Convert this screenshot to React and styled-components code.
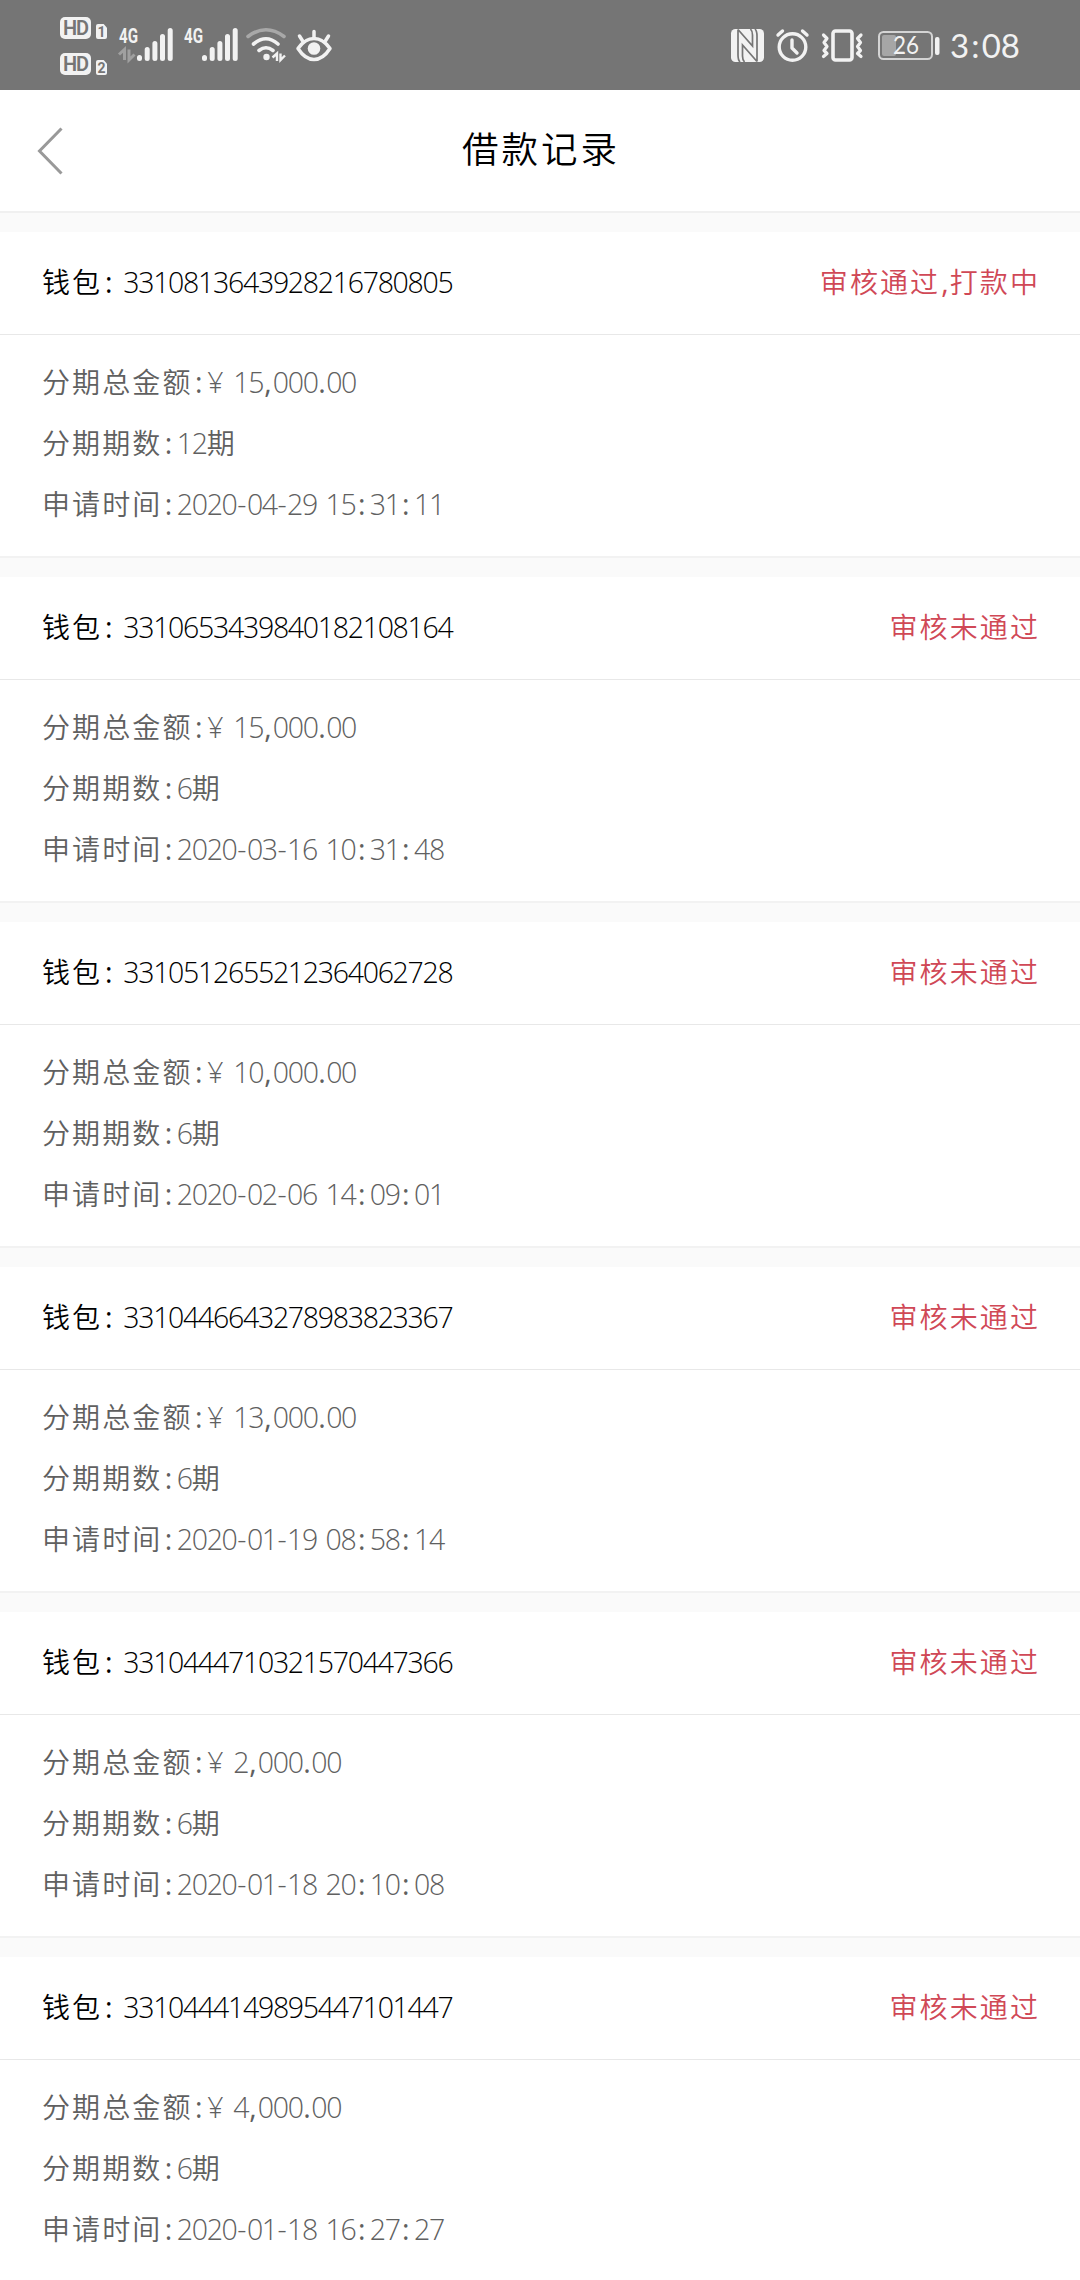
import React from "react";
import styled, { createGlobalStyle } from "styled-components";

const GlobalStyle = createGlobalStyle`
  * { box-sizing: border-box; }
  body {
    margin: 0;
    background: #fff;
    font-family: "Open Sans", "Noto Sans CJK SC", sans-serif;
    font-weight: 300;
  }
`;

const ink = "#f2f2f2";

const Page = styled.div`
  display: flex;
  flex-direction: column;
  width: 1080px;
  height: 2280px;
  overflow: hidden;
  background: #fafafa;
`;

const StatusBar = styled.div`
  flex: none;
  display: flex;
  justify-content: space-between;
  height: 90px;
  padding: 0 60px;
  background: #757575;
  color: ${ink};
`;

const StatusGroup = styled.div`
  display: flex;
  align-items: flex-start;
`;

const StatusIcon = styled.svg`
  flex: none;
  display: block;
  margin: ${(p) => p.$top}px ${(p) => p.$after || 0}px 0 0;
  overflow: visible;
`;

const HdStack = styled.div`
  display: flex;
  flex-direction: column;
  gap: 14px;
  margin: 17px 12px 0 0;
`;

const HdRow = styled.div`
  display: flex;
  align-items: flex-start;
  gap: 5px;
`;

const HdBadge = styled.span`
  width: 31px;
  height: 22px;
  border-radius: 5px;
  background: ${ink};
  color: #757575;
  font: 600 20px/22px Roboto, sans-serif;
  letter-spacing: -1px;
  text-align: center;
`;

const SimBadge = styled.span`
  width: 11px;
  height: 15px;
  margin-top: 7px;
  border-radius: 2px;
  clip-path: polygon(0 0, 70% 0, 100% 25%, 100% 100%, 0 100%);
  background: ${ink};
  color: #757575;
  font: 700 14px/16px Roboto, sans-serif;
  text-align: center;
`;

const Clock = styled.span`
  display: flex;
  margin-top: 27px;
  width: 70px;
  font: 400 33px/36px Lato, sans-serif;
  white-space: nowrap;
`;

const ClockColon = styled.span`
  width: 14px;
  text-align: center;
`;

const Header = styled.header`
  flex: none;
  display: grid;
  grid-template-columns: 120px 1fr 120px;
  align-items: center;
  height: 123px;
  background: #fff;
  border-bottom: 2px solid #f0f0f0;
`;

const BackButton = styled.button`
  display: flex;
  padding: 0 0 0 36px;
  border: 0;
  background: none;
`;

const Title = styled.h1`
  margin: 0;
  padding: 0 0 3px 2px;
  font-size: 36.5px;
  font-weight: 350;
  letter-spacing: 3px;
  line-height: 54px;
  text-align: center;
  color: #000;
`;

const Records = styled.main`
  flex: none;
  display: flex;
  flex-direction: column;
  gap: 19px;
  padding-top: 19px;
`;

const Card = styled.section`
  background: #fff;
  border-bottom: 2px solid #f2f2f2;
`;

const CardHead = styled.div`
  display: flex;
  justify-content: space-between;
  height: 103px;
  padding: 0 40px 0 42px;
  border-bottom: 1px solid #e8e8e8;
  line-height: 100px;
  color: #000;
`;

const CardBody = styled.div`
  height: 221px;
  padding: 17px 42px 0;
  color: #606060;
`;

const Line = styled.div`
  height: 61px;
  line-height: 61px;
`;

const Status = styled.span`
  color: #d04856;
`;

const Han = styled.span`
  font-size: 28px;
  font-weight: 350;
  letter-spacing: 2.1px;
`;

const Digits = styled.span`
  font-size: 28.5px;
  font-weight: 350;
  letter-spacing: -1.3px;
`;

const Mark = styled.span`
  display: inline-block;
  width: ${(p) => p.$box[0]}px;
  padding-right: ${(p) => p.$box[1]}px;
  font-size: 28.5px;
  font-weight: ${(p) => p.$box[2] || 400};
  text-align: center;
  white-space: nowrap;
`;

// Width, trailing space and weight of each punctuation mark.
const MARKS = {
  ":": [14.3, 2, 500],
  "：": [21, 8, 500],
  ",": [9.5, 0],
  ".": [8.5, 0],
  "-": [10.3, 0, 350],
  "¥": [18, 1, 350],
  " ": [8.5, 0],
};

// Splits a string into Han, digit and punctuation runs, each with its own tracking.
function Text({ children }) {
  const runs = children.match(/[0-9]+|[:：,.\-¥ ]|[^0-9:：,.\-¥ ]+/g) || [];
  return runs.map((run, i) => {
    if (/^[0-9]/.test(run)) return <Digits key={i}>{run}</Digits>;
    if (run in MARKS) return <Mark key={i} $box={MARKS[run]}>{run === "：" ? ":" : run === " " ? "\u00a0" : run}</Mark>;
    return <Han key={i}>{run}</Han>;
  });
}

const records = [
  { wallet: "3310813643928216780805", status: "审核通过,打款中", amount: "15,000.00", terms: 12, time: "2020-04-29 15:31:11" },
  { wallet: "3310653439840182108164", status: "审核未通过", amount: "15,000.00", terms: 6, time: "2020-03-16 10:31:48" },
  { wallet: "3310512655212364062728", status: "审核未通过", amount: "10,000.00", terms: 6, time: "2020-02-06 14:09:01" },
  { wallet: "3310446643278983823367", status: "审核未通过", amount: "13,000.00", terms: 6, time: "2020-01-19 08:58:14" },
  { wallet: "3310444710321570447366", status: "审核未通过", amount: "2,000.00", terms: 6, time: "2020-01-18 20:10:08" },
  { wallet: "3310444149895447101447", status: "审核未通过", amount: "4,000.00", terms: 6, time: "2020-01-18 16:27:27" },
];

function Signal({ active, after }) {
  return (
    <StatusIcon $top={27} $after={after} width="54" height="35" viewBox="0 0 54 35">
      <text x="0" y="15.5" fill={ink} fontFamily="Roboto" fontWeight="700" fontSize="20" textLength="19" lengthAdjust="spacingAndGlyphs">4G</text>
      {active && <path d="M0 27.500L5.500 22.500V33M10 22.500V33L15.500 27.500" fill="none" stroke="#a0a0a0" strokeWidth="3" />}
      <g stroke={ink} strokeWidth="5" strokeLinecap="round">
        <path d="M20.5 30.5v1M28.2 22.5v9M35.9 16.5v15M43.5 9.500v22M51.200 3.500v28" />
      </g>
    </StatusIcon>
  );
}

function Wifi() {
  return (
    <StatusIcon $top={28} $after={9} width="41" height="34" viewBox="0 0 41 34" fill="none" stroke={ink} strokeWidth="3.6" strokeLinecap="round">
      <path d="M2 8.500Q20 -5 38 8.500" stroke="#a8a8a8" />
      <path d="M7.500 16Q20 5.500 32 16M13 22.500Q20 17 27 22.500" />
      <circle cx="20.500" cy="29" r="3.200" fill={ink} stroke="none" />
      <path d="M26.500 29.500L31 25.500V33M34.500 25.500V32L39 27.500" strokeWidth="2.400" strokeLinecap="butt" />
    </StatusIcon>
  );
}

function Eye() {
  return (
    <StatusIcon $top={30} width="36" height="32" viewBox="0 0 36 32" fill="none" stroke={ink} strokeWidth="3.500" strokeLinecap="round">
      <path d="M2 18.500Q9 8.500 18 8.500T34 18.500Q27 29.500 18 29.500T2 18.500Z" strokeLinejoin="round" />
      <path d="M18 8V1.500M7 11.500L3.500 6M29 11.500L32.500 6" />
      <circle cx="18" cy="18.500" r="6.300" fill={ink} stroke="none" />
    </StatusIcon>
  );
}

function Nfc() {
  return (
    <StatusIcon $top={29} $after={12} width="33" height="33" viewBox="0 0 33 33">
      <rect width="33" height="33" rx="4.500" fill={ink} />
      <path d="M7 0.500V26Q7 31 9 33M7 0.500L21.500 17V6Q21.500 2 19.500 0" fill="none" stroke="#757575" strokeWidth="1.700" />
      <path d="M26 32.500V7Q26 2 24 0M26 32.500L11.500 16V27Q11.500 31 13.500 33" fill="none" stroke="#757575" strokeWidth="1.700" />
    </StatusIcon>
  );
}

function Alarm() {
  return (
    <StatusIcon $top={29} $after={12} width="33" height="33" viewBox="0 0 33 33" fill="none" stroke={ink} strokeWidth="3.400" strokeLinecap="round">
      <circle cx="16.500" cy="18" r="13.300" />
      <path d="M16 11v8l5 5" strokeLinejoin="round" />
      <path d="M2 6l4.500-4M31 6l-4.500-4" />
    </StatusIcon>
  );
}

function Vibrate() {
  return (
    <StatusIcon $top={29} $after={15} width="42" height="33" viewBox="0 0 42 33" fill="none" stroke={ink} strokeWidth="3.600" strokeLinecap="round" strokeLinejoin="round">
      <rect x="12" y="2" width="19" height="29" rx="2.500" />
      <path d="M2.500 6l3.500 3.500-3 4 3 4-3 4 3 3-3.500 3M40 6l-3.500 3.500 3 4-3 4 3 4-3 3 3.500 3" strokeWidth="3.200" />
    </StatusIcon>
  );
}

function Battery() {
  return (
    <StatusIcon $top={31} $after={10} width="62" height="29" viewBox="0 0 62 29">
      <rect x="1" y="1" width="53" height="27" rx="4.500" fill="none" stroke="#d4d4d4" strokeWidth="2" />
      <rect x="4" y="4" width="14" height="21" rx="2" fill="#a6a6a6" />
      <rect x="57" y="6" width="4.500" height="18" rx="2" fill={ink} />
      <text x="15" y="23" fill={ink} fontFamily="Lato" fontWeight="400" fontSize="25" textLength="26" lengthAdjust="spacingAndGlyphs">26</text>
    </StatusIcon>
  );
}

export default function App() {
  return (
    <Page>
      <GlobalStyle />
      <StatusBar>
        <StatusGroup>
          <HdStack>
            {[1, 2].map((n) => (
              <HdRow key={n}>
                <HdBadge>HD</HdBadge>
                <SimBadge>{n}</SimBadge>
              </HdRow>
            ))}
          </HdStack>
          <Signal active after={11} />
          <Signal after={8} />
          <Wifi />
          <Eye />
        </StatusGroup>
        <StatusGroup>
          <Nfc />
          <Alarm />
          <Vibrate />
          <Battery />
          <Clock>3<ClockColon>:</ClockColon>08</Clock>
        </StatusGroup>
      </StatusBar>
      <Header>
        <BackButton aria-label="返回">
          <svg width="28" height="50" viewBox="0 0 28 50" fill="none" stroke="#999" strokeWidth="3">
            <path d="M25.500 2.500L3.500 25L25.500 47.500" />
          </svg>
        </BackButton>
        <Title>借款记录</Title>
      </Header>
      <Records>
        {records.map((r) => (
          <Card key={r.wallet}>
            <CardHead>
              <span><Text>{`钱包：${r.wallet}`}</Text></span>
              <Status><Text>{r.status}</Text></Status>
            </CardHead>
            <CardBody>
              <Line><Text>{`分期总金额:¥ ${r.amount}`}</Text></Line>
              <Line><Text>{`分期期数:${r.terms}期`}</Text></Line>
              <Line><Text>{`申请时间:${r.time}`}</Text></Line>
            </CardBody>
          </Card>
        ))}
      </Records>
    </Page>
  );
}
